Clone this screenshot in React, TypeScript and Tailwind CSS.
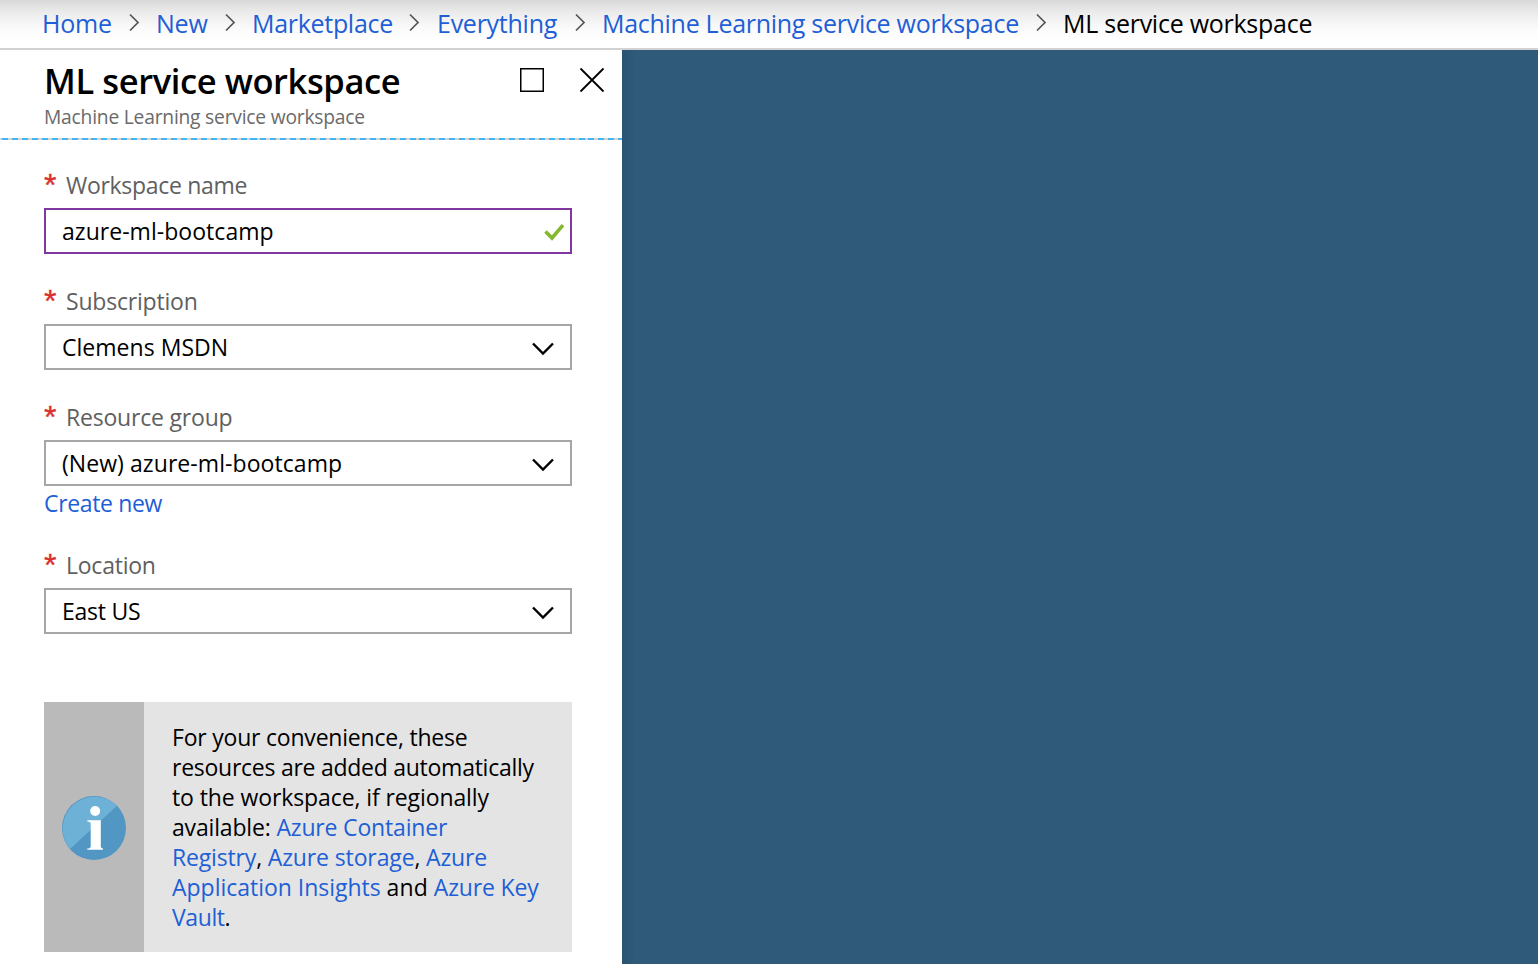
import React from 'react';

function Separator() {
  return (
    <svg className="block h-5 w-3 shrink-0" viewBox="0 0 12 20" fill="none" stroke="#555" strokeWidth="1.7">
      <path d="M1 1.5 9 9.5 1 17.5" />
    </svg>
  );
}

function Crumb({ className, children }: { className: string; children: React.ReactNode }) {
  return (
    <div className="flex shrink-0 items-start">
      <a className={'block shrink-0 whitespace-nowrap text-[#1e5fd6] ' + className}>{children}</a>
      <div className="pt-[11px]">
        <Separator />
      </div>
    </div>
  );
}

function Label({ className, children }: { className: string; children: React.ReactNode }) {
  return (
    <div className="flex h-10 items-start text-[23px] leading-[38px] text-[#606060]">
      <span className="w-[22px] font-['Liberation_Sans'] text-[32px] leading-[38px] text-[#d9302c] [-webkit-text-stroke:0.4px_#d9302c]">
        *
      </span>
      <span className={'whitespace-nowrap ' + className}>{children}</span>
    </div>
  );
}

function ChevronDown() {
  return (
    <svg className="block h-4 w-6" viewBox="0 0 24 16" fill="none" stroke="#000" strokeWidth="2.4">
      <path d="M2 2.5 12 12.5 22 2.5" />
    </svg>
  );
}

function Select({ className, children }: { className: string; children: React.ReactNode }) {
  return (
    <div className="flex h-[46px] w-[528px] items-start justify-between border-2 border-[#a6a6a6] pr-[15px] pl-4 text-[23px] text-black">
      <span className={'leading-[43px] whitespace-nowrap ' + className}>{children}</span>
      <div className="pt-[15px]">
        <ChevronDown />
      </div>
    </div>
  );
}

function InfoIcon() {
  return (
    <svg className="block size-16" viewBox="0 0 64 64">
      <circle cx="32" cy="32" r="32" fill="#5297c4" />
      <path d="M8 53A32 32 0 0 1 55 9.7Z" fill="#6db1d7" />
      <circle cx="33.2" cy="15" r="5" fill="#fff" />
      <path d="M25.3 24.3H38.8V50.5Q38.8 52.4 41 52.6V53.8H25.3V52.6Q28.7 52.4 28.7 50.5V27.7Q28.7 25.7 25.3 25.5Z" fill="#fff" />
    </svg>
  );
}

export default function App() {
  return (
    <div className="flex h-[964px] w-[1538px] flex-col overflow-hidden bg-white font-['Open_Sans','Noto_Sans',sans-serif]">
      <nav className="flex h-[50px] shrink-0 items-start border-b-2 border-[#d2d2d2] bg-[linear-gradient(to_bottom,#d9d9d9_0px,#ececec_13px,#fafafa_28px,#ffffff_40px)] pt-[2px] pl-[42px] text-[25px] leading-[42px]">
        <Crumb className="w-[87px] tracking-[-0.2px]">Home</Crumb>
        <div className="pl-[15px]">
          <Crumb className="w-[69px] tracking-[-0.2px]">New</Crumb>
        </div>
        <div className="pl-[15px]">
          <Crumb className="w-[157px] tracking-[-0.3px]">Marketplace</Crumb>
        </div>
        <div className="pl-[16px]">
          <Crumb className="w-[138px] tracking-[-0.26px]">Everything</Crumb>
        </div>
        <div className="pl-[15px]">
          <Crumb className="w-[434px] tracking-[-0.28px]">Machine Learning service workspace</Crumb>
        </div>
        <span className="pl-[15px] tracking-[-0.26px] whitespace-nowrap text-black">ML service workspace</span>
      </nav>

      <div className="flex min-h-0 flex-1">
        <main className="flex w-[622px] shrink-0 flex-col">
          <header className="flex h-[88px] shrink-0 justify-between pr-[17px] pl-[44px]">
            <div>
              <h1 className="h-[54px] pt-1 text-[34.5px] leading-[54px] font-semibold tracking-[-0.4px] whitespace-nowrap text-black">
                ML service workspace
              </h1>
              <p className="text-[19.25px] leading-[26px] tracking-[-0.22px] whitespace-nowrap text-[#6a6a6a]">
                Machine Learning service workspace
              </p>
            </div>
            <div className="flex gap-[34px] pt-[17px]">
              <svg className="block size-[26px]" viewBox="0 0 26 26" fill="none" stroke="#000" strokeWidth="1.5">
                <rect x="1.75" y="1.75" width="22.5" height="22.5" />
              </svg>
              <svg className="block size-[26px]" viewBox="0 0 26 26" fill="none" stroke="#000" strokeWidth="1.8">
                <path d="M1.5 1.5 24.5 24.5M24.5 1.5 1.5 24.5" />
              </svg>
            </div>
          </header>
          <div className="h-0.5 shrink-0 bg-[repeating-linear-gradient(to_right,#d2d2d2_0px,#d2d2d2_2px,#44b5ee_2px,#44b5ee_8px,#d2d2d2_8px,#d2d2d2_9.94px)]" />

          <form className="flex flex-col pl-11">
            <div className="pt-[26px]">
              <Label className="tracking-[-0.3px]">Workspace name</Label>
            </div>
            <div className="mt-[2px] flex h-[46px] w-[528px] items-start justify-between border-2 border-[#80379f] pr-[5px] pl-4 text-[23px] text-black">
              <span className="leading-[43px] tracking-[0.04px] whitespace-nowrap">azure-ml-bootcamp</span>
              <svg className="mt-[13px] block h-[18px] w-[21px]" viewBox="0 0 21 18" fill="none" stroke="#86b82e" strokeWidth="3.6">
                <path d="M1.5 8.5 8 15 19 2.2" />
              </svg>
            </div>

            <div className="pt-[28px] pb-[2px]">
              <Label className="tracking-[-0.2px]">Subscription</Label>
            </div>
            <Select className="tracking-[0.03px]">Clemens MSDN</Select>

            <div className="pt-[28px] pb-[2px]">
              <Label className="tracking-[-0.2px]">Resource group</Label>
            </div>
            <Select className="tracking-[0.07px]">(New) azure-ml-bootcamp</Select>
            <a className="h-[34px] text-[23px] leading-[34px] tracking-[-0.36px] text-[#1e5fd6]">Create new</a>

            <div className="pt-[26px] pb-[2px]">
              <Label className="tracking-[-0.24px]">Location</Label>
            </div>
            <Select className="tracking-[-0.25px]">East US</Select>
          </form>

          <section className="mt-[68px] ml-11 flex h-[250px] w-[528px] shrink-0">
            <div className="flex w-[100px] items-center justify-center bg-[#bababa] pt-0.5">
              <InfoIcon />
            </div>
            <p className="flex-1 bg-[#e4e4e4] pt-[20px] pl-7 text-[23px] leading-[30px] tracking-[-0.17px] whitespace-nowrap text-black">
              <span className="tracking-[-0.21px]">For your convenience, these</span>
              <br />
              <span className="tracking-[-0.26px]">resources are added automatically</span>
              <br />
              <span className="tracking-[-0.1px]">to the workspace, if regionally</span>
              <br />
              available: <a className="text-[#1e5fd6]">Azure Container</a>
              <br />
              <a className="text-[#1e5fd6]">Registry</a>, <a className="tracking-[-0.12px] text-[#1e5fd6]">Azure storage</a>,{' '}
              <a className="text-[#1e5fd6]">Azure</a>
              <br />
              <a className="tracking-[-0.02px] text-[#1e5fd6]">Application Insights</a>{' '}
              <span className="tracking-[0.2px]">and</span> <a className="text-[#1e5fd6]">Azure Key</a>
              <br />
              <a className="tracking-[-0.4px] text-[#1e5fd6]">Vault</a>.
            </p>
          </section>
        </main>
        <aside className="flex-1 bg-[#2f5a7a] bg-[linear-gradient(to_right,#2a5371_0px,#2f5a7a_14px)]" />
      </div>
    </div>
  );
}
